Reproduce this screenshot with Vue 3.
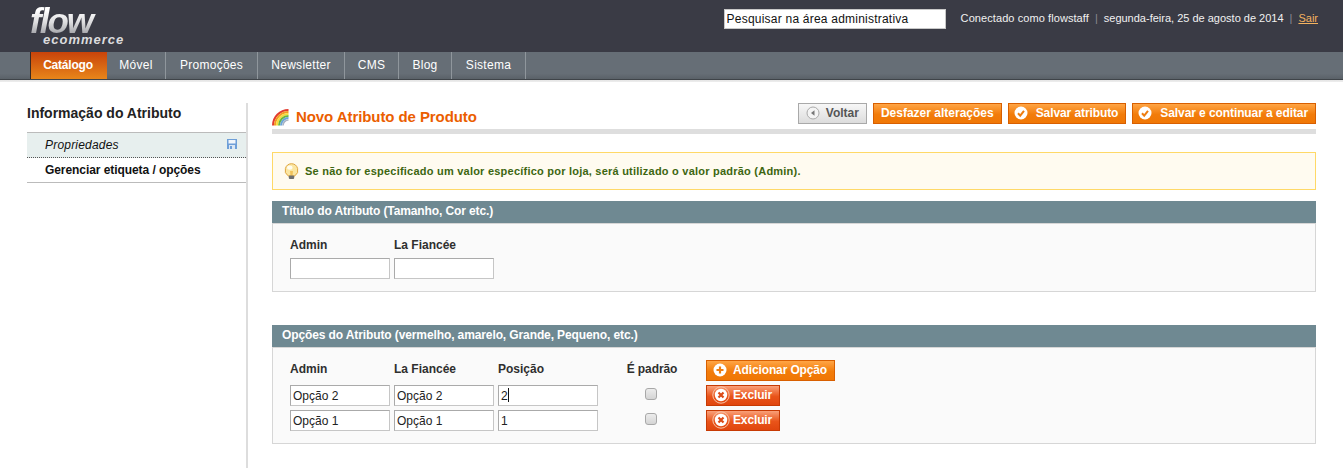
<script setup>
const navItems = [
  { label: 'Catálogo', active: true, width: 77 },
  { label: 'Móvel', width: 59 },
  { label: 'Promoções', width: 92 },
  { label: 'Newsletter', width: 87 },
  { label: 'CMS', width: 54 },
  { label: 'Blog', width: 53 },
  { label: 'Sistema', width: 74 }
]
const options = [
  { admin: 'Opção 2', store: 'Opção 2', pos: '2', caret: true },
  { admin: 'Opção 1', store: 'Opção 1', pos: '1', caret: false }
]
</script>

<template>
  <div class="page">
    <header class="top">
      <div class="logo">
        <span class="logo-flow">flow</span>
        <span class="logo-sub">ecommerce</span>
      </div>
      <div class="top-right">
        <input class="search" type="text" value="Pesquisar na área administrativa" />
        <div class="info">
          <span class="user">Conectado como flowstaff</span><span class="sep">|</span><span>segunda-feira, 25 de agosto de 2014</span><span class="sep">|</span><a class="logout">Sair</a>
        </div>
      </div>
    </header>

    <nav class="nav">
      <a
        v-for="item in navItems"
        :key="item.label"
        class="nav-item"
        :class="{ active: item.active }"
        :style="{ width: item.width + 'px' }"
      >{{ item.label }}</a>
    </nav>
    <div class="nav-strip"></div>

    <div class="columns">
      <aside class="side">
        <h3 class="side-title">Informação do Atributo</h3>
        <ul class="tabs">
          <li class="tab current">
            <span>Propriedades</span>
            <svg class="disk" viewBox="0 0 10 10" width="10" height="10">
              <rect width="10" height="10" fill="#6f9fd8" />
              <rect x="1.500" y="1" width="7" height="3.500" fill="#f2f6fb" />
              <rect x="2" y="6" width="6" height="4" fill="#dbe6f3" />
              <rect x="3" y="7" width="2" height="3" fill="#6f9fd8" />
            </svg>
          </li>
          <li class="tab">Gerenciar etiqueta / opções</li>
        </ul>
      </aside>

      <main class="main">
        <div class="head">
          <h3 class="title">
            <svg class="rainbow" viewBox="0 0 17 17" width="17" height="17" fill="none">
              <path d="M1 16.500A15.500 15.500 0 0 1 16.500 1" stroke="#e23b2e" stroke-width="2" />
              <path d="M3 16.500A13.500 13.500 0 0 1 16.500 3" stroke="#f39a21" stroke-width="2" />
              <path d="M5 16.500A11.500 11.500 0 0 1 16.500 5" stroke="#f5dc3c" stroke-width="2" />
              <path d="M7 16.500A9.500 9.500 0 0 1 16.500 7" stroke="#69b73f" stroke-width="2" />
              <path d="M9 16.500A7.500 7.500 0 0 1 16.500 9" stroke="#6aa5d8" stroke-width="2" />
              <path d="M11 16.500A5.500 5.500 0 0 1 16.500 11" stroke="#a9b4c4" stroke-width="1.600" />
            </svg>
            Novo Atributo de Produto
          </h3>
          <div class="actions">
            <button class="btn back">
              <svg viewBox="0 0 14 14" width="14" height="14">
                <circle cx="7" cy="7" r="6" fill="#f4f4f4" stroke="#aaa" />
                <path d="M8.500 4.200 5 7l3.500 2.800z" fill="#777" />
              </svg>
              Voltar
            </button>
            <button class="btn plain">Desfazer alterações</button>
            <button class="btn save">
              <svg viewBox="0 0 14 14" width="14" height="14">
                <circle cx="7" cy="7" r="6.500" fill="#fff" />
                <path d="M4 7.200 6.200 9.600 10 4.800" fill="none" stroke="#ee7d10" stroke-width="2" />
              </svg>
              Salvar atributo
            </button>
            <button class="btn save">
              <svg viewBox="0 0 14 14" width="14" height="14">
                <circle cx="7" cy="7" r="6.500" fill="#fff" />
                <path d="M4 7.200 6.200 9.600 10 4.800" fill="none" stroke="#ee7d10" stroke-width="2" />
              </svg>
              Salvar e continuar a editar
            </button>
          </div>
        </div>

        <div class="notice">
          <svg class="bulb" viewBox="0 0 15 16" width="15" height="16">
            <path d="M7.500.700a6.600 6.600 0 0 0-3.400 12.100V13h6.800v-.200A6.600 6.600 0 0 0 7.500.700z" fill="#fbe6a2" stroke="#dfa642" />
            <ellipse cx="5.800" cy="4.600" rx="2.700" ry="2.200" fill="#fffdf0" />
            <path d="M6 8h3l-.5 5h-2z" fill="#f2c35a" />
            <rect x="4.800" y="12.600" width="5.400" height="3.400" rx="1" fill="#6e6e6e" />
          </svg>
          <span>Se não for especificado um valor específico por loja, será utilizado o valor padrão (Admin).</span>
        </div>

        <section class="box first">
          <div class="box-head">Título do Atributo (Tamanho, Cor etc.)</div>
          <div class="box-body">
            <div class="grid grid-title">
              <div class="label">Admin</div>
              <div class="label">La Fiancée</div>
              <input class="field" type="text" />
              <input class="field" type="text" />
            </div>
          </div>
        </section>

        <section class="box second">
          <div class="box-head">Opções do Atributo (vermelho, amarelo, Grande, Pequeno, etc.)</div>
          <div class="box-body options">
            <div class="grid grid-options">
              <div class="label">Admin</div>
              <div class="label">La Fiancée</div>
              <div class="label">Posição</div>
              <div class="label center">É padrão</div>
              <div>
                <button class="btn add">
                  <svg viewBox="0 0 14 14" width="14" height="14">
                    <circle cx="7" cy="7" r="6.500" fill="#fff" />
                    <path d="M7 3.500v7M3.500 7h7" stroke="#ee7d10" stroke-width="2.200" />
                  </svg>
                  Adicionar Opção
                </button>
              </div>
              <template v-for="opt in options" :key="opt.admin">
                <input class="field" type="text" :value="opt.admin" />
                <input class="field" type="text" :value="opt.store" />
                <div class="field-wrap">
                  <input class="field" type="text" :value="opt.pos" />
                  <span v-if="opt.caret" class="caret"></span>
                </div>
                <div class="center-cell"><input class="check" type="checkbox" /></div>
                <div>
                  <button class="btn danger">
                    <svg viewBox="0 0 18 18" width="18" height="18">
                      <circle cx="9" cy="9" r="8.200" fill="none" stroke="#f7c4a8" />
                      <circle cx="9" cy="9" r="6.200" fill="#fff" />
                      <path d="M6.500 6.500l5 5M11.500 6.500l-5 5" stroke="#dc4a16" stroke-width="2.200" />
                    </svg>
                    Excluir
                  </button>
                </div>
              </template>
            </div>
          </div>
        </section>
      </main>
    </div>
  </div>
</template>

<style>
html, body { margin: 0; background: #fff; }
</style>

<style scoped>
.page {
  width: 1343px;
  height: 468px;
  overflow: hidden;
  background: #fff;
  font-family: "Liberation Sans", Arial, sans-serif;
  font-size: 12px;
  color: #2f2f2f;
}
.top {
  height: 52px;
  background: #3a3b45;
  display: flex;
  justify-content: space-between;
  padding: 0 25px 0 30px;
  box-sizing: border-box;
}
.logo {
  display: flex;
  flex-direction: column;
  align-items: flex-start;
  padding-top: 6px;
}
.logo-flow {
  font-size: 35px;
  line-height: 30px;
  font-style: italic;
  font-weight: 700;
  letter-spacing: -2px;
  padding-right: 4px;
  background: linear-gradient(180deg, #fff 15%, #dcdcde 55%, #9a9ba0 100%);
  -webkit-background-clip: text;
  background-clip: text;
  color: transparent;
}
.logo-sub {
  margin-left: 13px;
  font-size: 13px;
  line-height: 7px;
  font-weight: 700;
  font-style: italic;
  letter-spacing: 1px;
  color: #dcdcde;
}
.top-right {
  display: flex;
  align-items: flex-start;
  padding-top: 9px;
}
.search {
  width: 222px;
  height: 20px;
  box-sizing: border-box;
  border: 1px solid #c8c8c8;
  background: #fff;
  padding: 0 2px;
  font: 12px "Liberation Sans", Arial, sans-serif;
  letter-spacing: 0.220px;
  color: #111;
  margin-right: 15px;
}
.info {
  color: #f1f1f1;
  font-size: 11px;
  line-height: 18px;
  display: flex;
}
.user { letter-spacing: 0.080px; }
.sep { margin: 0 6px; color: #8a8b92; }
.logout { color: #f4b35f; text-decoration: underline; }

.nav {
  height: 27px;
  background: linear-gradient(180deg, #666e76 0, #666e76 80%, #5a6168 100%);
  display: flex;
  padding-left: 30px;
}
.nav-item {
  box-sizing: border-box;
  color: #fff;
  font-size: 12px;
  line-height: 27px;
  text-align: center;
  letter-spacing: 0.280px;
  border-right: 1px solid #8f969c;
}
.nav-item.active {
  background: linear-gradient(180deg, #c8430a 0, #e8861a 100%);
  font-weight: 700;
  letter-spacing: -0.200px;
  padding-right: 2px;
  border-right: 0;
  border-left: 1px solid #3a2a22;
}
.nav-strip {
  height: 3px;
  background: linear-gradient(180deg, #3f4449 0, #3f4449 33%, #e4e4e4 34%, #eee 100%);
}

.columns {
  display: flex;
  padding: 21px 27px 0;
  height: 386px;
  box-sizing: border-box;
}
.side {
  width: 221px;
  flex: none;
  box-sizing: border-box;
  border-right: 2px solid #ddd;
}
.side-title {
  margin: 0;
  font-size: 14px;
  line-height: 20px;
  font-weight: 700;
  color: #222;
}
.tabs {
  list-style: none;
  margin: 9px 0 0;
  padding: 0;
  border-top: 1px solid #bbb;
}
.tab {
  height: 25px;
  line-height: 25px;
  padding: 0 0 0 18px;
  font-weight: 700;
  color: #111;
  border-bottom: 1px solid #bbb;
  box-sizing: border-box;
  letter-spacing: -0.070px;
}
.tab.current {
  background: #e7efee;
  font-weight: 400;
  font-style: italic;
  border-bottom: 1px dotted #555;
  display: flex;
  align-items: center;
  justify-content: space-between;
  padding: 1px 9px 0 18px;
  letter-spacing: 0.200px;
}
.disk { margin-top: -3px; }
.main {
  margin-left: 24px;
  width: 1044px;
  flex: none;
}
.head {
  height: 26px;
  display: flex;
  justify-content: space-between;
  border-bottom: 5px solid #dedede;
}
.title {
  margin: 0;
  padding-top: 4px;
  display: flex;
  align-items: center;
  align-self: flex-start;
  gap: 7px;
  font-size: 15px;
  line-height: 20px;
  font-weight: 700;
  letter-spacing: -0.080px;
  color: #eb5e00;
}
.rainbow { flex: none; }
.actions { display: flex; gap: 6px; align-items: flex-start; }
.btn {
  height: 21px;
  box-sizing: border-box;
  display: inline-flex;
  align-items: center;
  gap: 7px;
  padding: 0 7px 1px;
  border: 1px solid #d85f00;
  background: linear-gradient(180deg, #ffa545 0, #f27c0a 55%, #f07705 100%);
  color: #fff;
  font: 700 12px "Liberation Sans", Arial, sans-serif;
  white-space: nowrap;
  cursor: pointer;
}
.btn svg { flex: none; }
.btn.back {
  border-color: #a9a9a9;
  background: linear-gradient(180deg, #f7f7f7 0, #dcdcdc 100%);
  color: #555;
  gap: 6px;
}
.btn.save { gap: 8px; padding: 0 7px 1px 5px; letter-spacing: -0.090px; }
.btn.add { gap: 6px; padding: 0 7px 1px 6px; letter-spacing: -0.130px; }
.btn.danger {
  border-color: #c73a04;
  background: linear-gradient(180deg, #f9a079 0, #e9541a 55%, #e0460e 100%);
  gap: 3px;
  padding: 0 7px 1px 5px;
  letter-spacing: -0.130px;
}
.notice {
  margin-top: 18px;
  height: 38px;
  box-sizing: border-box;
  display: flex;
  align-items: center;
  gap: 6px;
  padding: 0 12px 0 11px;
  background: #fffbf0;
  border: 1px solid #ffd967;
  color: #3d6611;
  font-size: 11px;
  font-weight: 700;
  letter-spacing: 0.226px;
}
.box.first { margin-top: 11px; }
.box.second { margin-top: 33px; }
.box-head {
  height: 22px;
  line-height: 21px;
  padding-left: 10px;
  background: #6f8992;
  color: #fff;
  font-size: 12px;
  font-weight: 700;
  letter-spacing: -0.110px;
  box-sizing: border-box;
}
.box-body {
  background: #fafafa;
  border: 1px solid #d6d6d6;
  padding: 11px 17px 12px;
  height: 69px;
  box-sizing: border-box;
}
.box-body.options { height: 97px; padding-top: 12px; }
.grid { display: grid; column-gap: 4px; }
.grid-title { grid-template-columns: 100px 100px; grid-template-rows: 21px 21px; row-gap: 2px; }
.grid-options { grid-template-columns: 100px 100px 100px 100px auto; grid-auto-rows: 21px; row-gap: 4px; }
.label {
  font-weight: 700;
  line-height: 19px;
  color: #2f2f2f;
}
.grid-title .label { line-height: 21px; }
.center { text-align: center; letter-spacing: -0.100px; }
.field {
  width: 100px;
  height: 21px;
  box-sizing: border-box;
  border: 1px solid #aaa;
  border-color: #aaa #c6c6c6 #c6c6c6 #aaa;
  background: #fff;
  padding: 0 2px;
  font: 12px "Liberation Sans", Arial, sans-serif;
  color: #222;
  display: block;
}
.field-wrap { position: relative; }
.caret {
  position: absolute;
  left: 10px;
  top: 3px;
  width: 1px;
  height: 14px;
  background: #111;
}
.center-cell {
  display: flex;
  justify-content: center;
  padding-top: 3px;
  box-sizing: border-box;
}
.check {
  appearance: none;
  -webkit-appearance: none;
  width: 12px;
  height: 12px;
  margin: 0 2px 0 0;
  border: 1px solid #a8a8a8;
  border-radius: 3px;
  background: linear-gradient(180deg, #ececec, #d4d4d4);
}
</style>
